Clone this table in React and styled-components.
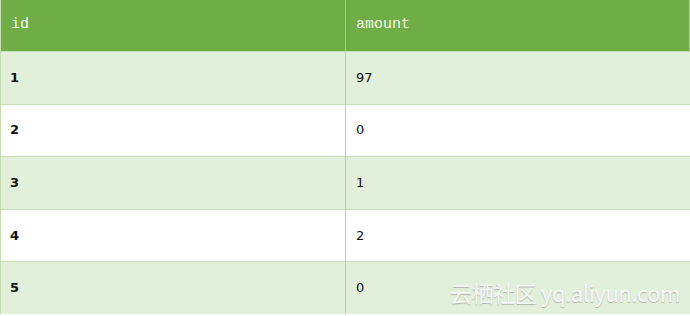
import React from 'react';
import styled, { createGlobalStyle } from 'styled-components';

const rows = [
  { id: 1, amount: 97 },
  { id: 2, amount: 0 },
  { id: 3, amount: 1 },
  { id: 4, amount: 2 },
  { id: 5, amount: 0 },
];

const GlobalStyle = createGlobalStyle`
  html, body {
    margin: 0;
    padding: 0;
    background: #ffffff;
  }
`;

const Page = styled.div`
  position: relative;
  width: 690px;
  height: 316px;
  overflow: hidden;
`;

const Table = styled.div`
  display: grid;
  grid-template-columns: 345px 1fr;
  width: 690px;
  border-left: 1px solid #c5dfb3;
  box-sizing: border-box;
`;

const HeadCell = styled.div`
  height: 51px;
  display: flex;
  align-items: center;
  padding-left: 10px;
  padding-bottom: 3px;
  background: #70ad47;
  color: #f4faef;
  font-family: "Liberation Mono", "Courier New", monospace;
  font-size: 15px;
  border-right: 1px solid #a6cf8a;
  box-sizing: border-box;

  &:last-child {
    border-right: none;
  }
`;

const Cell = styled.div`
  height: 52.6px;
  display: flex;
  align-items: center;
  padding-left: ${(p) => (p.$id ? '9px' : '10px')};
  padding-bottom: 1px;
  background: ${(p) => (p.$odd ? '#e2efda' : '#ffffff')};
  border-top: 1.5px solid #c5dfb3;
  border-right: ${(p) => (p.$id ? '1px solid #b6d7a0' : 'none')};
  box-sizing: border-box;
  color: #111111;
  font-family: "DejaVu Sans", Verdana, sans-serif;
  font-weight: ${(p) => (p.$id ? 700 : 400)};
  font-size: 13px;
`;

const Watermark = styled.div`
  position: absolute;
  right: 10px;
  bottom: 8px;
  font-family: "Noto Sans CJK SC", "Liberation Sans", sans-serif;
  font-size: 22px;
  letter-spacing: -0.4px;
  color: rgba(255, 255, 255, 0.9);
  text-shadow: 0 1px 1px rgba(110, 110, 110, 0.45);
  white-space: nowrap;
`;

export default function App() {
  return (
    <Page>
      <GlobalStyle />
      <Table>
        <HeadCell>id</HeadCell>
        <HeadCell>amount</HeadCell>
        {rows.map((r, i) => (
          <React.Fragment key={r.id}>
            <Cell $id $odd={i % 2 === 0}>{r.id}</Cell>
            <Cell $odd={i % 2 === 0}>{r.amount}</Cell>
          </React.Fragment>
        ))}
      </Table>
      <Watermark>云栖社区 yq.aliyun.com</Watermark>
    </Page>
  );
}
